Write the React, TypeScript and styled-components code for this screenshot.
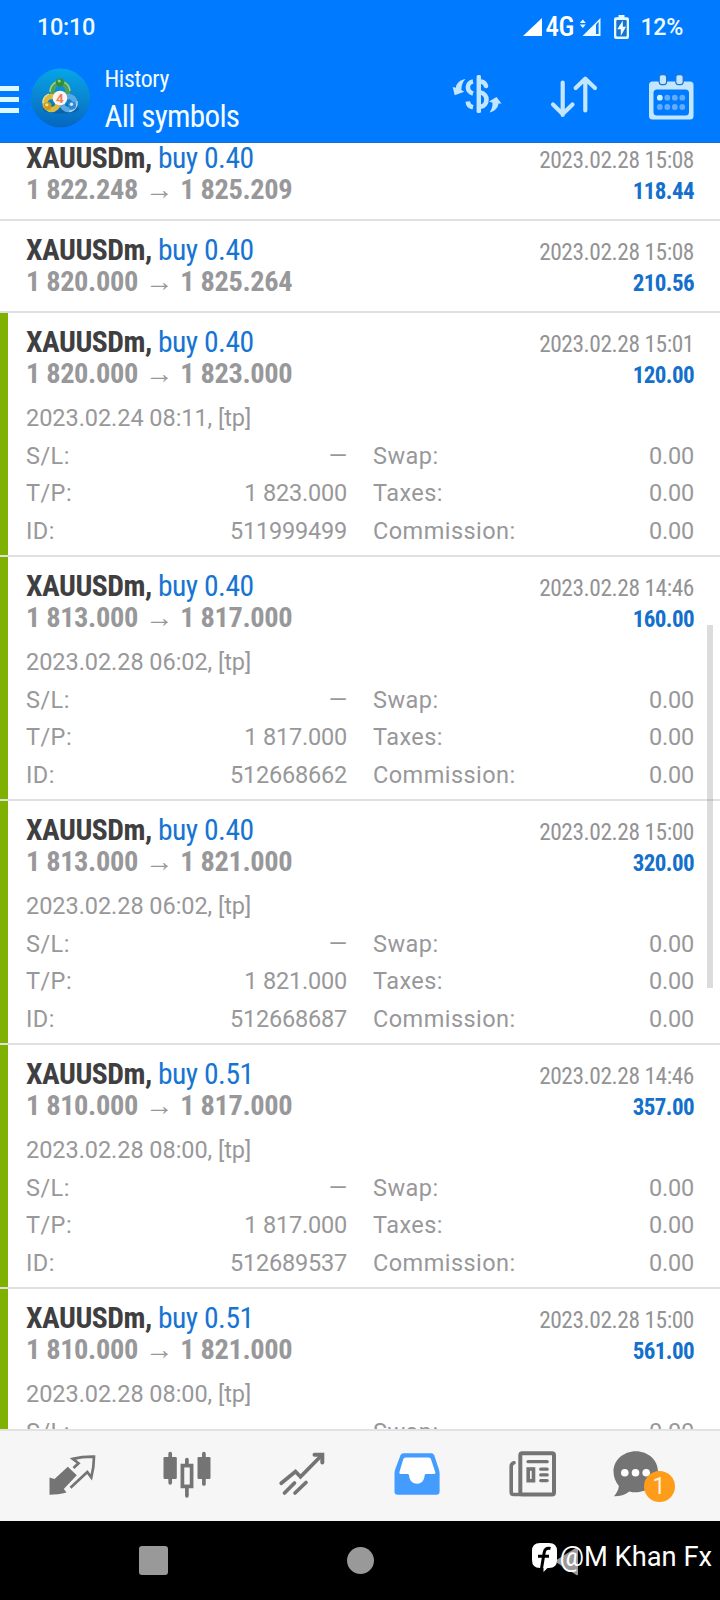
import React from "react";
import styled, { createGlobalStyle } from "styled-components";

const CONDENSED = '"Roboto Condensed", Roboto, sans-serif';

const GlobalStyle = createGlobalStyle`
  *, *::before, *::after { box-sizing: border-box; }
  body { margin: 0; font-family: Roboto, sans-serif; background: #fff; }
  svg { display: block; flex: none; overflow: visible; }
`;

const Screen = styled.div`
  display: flex;
  flex-direction: column;
  width: 720px;
  height: 1600px;
  overflow: hidden;
  background: #fff;
`;

/* ---------- header ---------- */

const Header = styled.header`
  flex: none;
  height: 143px;
  background: #007aff;
  border-bottom: 1px solid #1a6fd0;
  color: #fff;
`;

const StatusBar = styled.div`
  display: flex;
  align-items: center;
  height: 53px;
  padding: 0 37px 0 37px;
`;

const StatusText = styled.span<{ $size: number }>`
  font-size: ${(p) => p.$size}px;
  font-weight: 500;
  line-height: 53px;
  padding-top: 1px;
  letter-spacing: -0.3px;
  color: #eefaff;
`;

const StatusIcons = styled.div`
  display: flex;
  align-items: center;
  margin-left: auto;
`;

const NetworkLabel = styled.span`
  width: 38px;
  padding: 1px 0 0 3px;
  font: 500 27px/53px ${CONDENSED};
  letter-spacing: -0.4px;
  color: #fff;
`;

const BatteryWrap = styled.div`
  margin: 0 11px 0 13px;
`;

const Toolbar = styled.div`
  display: flex;
  align-items: center;
  height: 90px;
  padding-right: 25px;
`;

const MenuButton = styled.div`
  display: flex;
  flex-direction: column;
  gap: 6.5px;
  width: 19px;
  margin-top: 3px;
`;

const MenuBar = styled.i`
  height: 4.7px;
  background: #dff8ff;
`;

const LogoWrap = styled.div`
  margin-left: 12px;
`;

const Titles = styled.div`
  margin-left: 14.5px;
  padding-top: 4px;
  font-family: ${CONDENSED};
  color: #f4fcff;
`;

const SmallTitle = styled.div`
  margin-top: -2px;
  font-size: 23.8px;
  line-height: 35px;
  letter-spacing: -0.4px;
`;

const BigTitle = styled.div`
  font-size: 31.2px;
  line-height: 40px;
  letter-spacing: -0.7px;
`;

const Actions = styled.div`
  display: flex;
  align-items: flex-start;
  margin-left: auto;
`;

const TradeAction = styled.div`
  margin-right: 44px;
`;

const SortAction = styled.div`
  margin-right: 47px;
`;

/* ---------- history list ---------- */

const List = styled.main`
  position: relative;
  flex: 1;
  min-height: 0;
  overflow: hidden;
`;

const ListContent = styled.div`
  margin-top: -14px;
`;

const Deal = styled.section<{ $open: boolean }>`
  display: flex;
  height: ${(p) => (p.$open ? 244 : 92)}px;
  border-bottom: 2px solid #e0e0e0;
`;

const Stripe = styled.div<{ $on: boolean }>`
  flex: none;
  width: 7.5px;
  background: ${(p) => (p.$on ? "#7fb200" : "transparent")};
`;

const DealBody = styled.div`
  flex: 1;
  padding: 13px 26px 0 18.5px;
`;

const Line = styled.div`
  display: flex;
  justify-content: space-between;
  height: 32px;
  line-height: 32px;
  font-family: ${CONDENSED};
  white-space: pre;
`;

const Instrument = styled.span`
  font-size: 29.6px;
  font-weight: 700;
  letter-spacing: -0.5px;
  color: #3f3f41;
`;

const Side = styled.span`
  font-weight: 400;
  color: #1674d2;
`;

const Prices = styled.span`
  font-size: 28.4px;
  font-weight: 700;
  letter-spacing: -0.37px;
  color: #98989a;
`;

const Arrow = styled.span`
  margin: 0 1px;
`;

const CloseTime = styled.span`
  padding-top: 2px;
  font-size: 23.4px;
  letter-spacing: -0.43px;
  color: #939395;
`;

const Profit = styled.span`
  padding-top: 2px;
  font-size: 23px;
  font-weight: 700;
  letter-spacing: -0.6px;
  color: #1470cb;
`;

const Details = styled.div`
  margin-top: 10px;
  font-size: 23.5px;
  font-weight: 400;
  line-height: 37.5px;
  color: #98989a;
`;

const Comment = styled.div`
  letter-spacing: -0.05px;
`;

const Fields = styled.div`
  display: grid;
  grid-template-columns: 321px 321px;
  column-gap: 26px;
`;

const Field = styled.div`
  display: flex;
  justify-content: space-between;
  height: 37.5px;
`;

const FieldName = styled.span`
  letter-spacing: 0.45px;
`;

const FieldValue = styled.span`
  letter-spacing: -0.2px;
`;

const ScrollThumb = styled.div`
  position: absolute;
  top: 482px;
  right: 7px;
  width: 6px;
  height: 363px;
  background: rgba(110, 110, 110, 0.24);
`;

/* ---------- bottom bars ---------- */

const TabBar = styled.nav`
  display: flex;
  flex: none;
  height: 92px;
  padding: 0 14.5px;
  background: #f6f6f6;
  border-top: 2px solid #e2e2e2;
`;

const Tab = styled.div`
  position: relative;
  display: flex;
  justify-content: center;
  width: 115px;
  padding-top: 17px;
`;

const Badge = styled.span`
  position: absolute;
  left: 54px;
  top: 39.5px;
  width: 31px;
  height: 31px;
  border-radius: 50%;
  background: #ff9c1a;
  color: #fff3df;
  font-size: 23px;
  line-height: 32px;
  text-align: center;
`;

const SystemBar = styled.footer`
  position: relative;
  display: flex;
  align-items: center;
  flex: none;
  height: 79px;
  padding: 0 50px;
  background: #000;
`;

const SystemKey = styled.div`
  display: flex;
  justify-content: center;
  width: 207px;
`;

const Square = styled.i`
  width: 29px;
  height: 29px;
  border-radius: 3px;
  background: #999;
`;

const Circle = styled.i`
  width: 27px;
  height: 27px;
  border-radius: 50%;
  background: #999;
`;

const Signature = styled.div`
  position: absolute;
  left: 532px;
  top: 20px;
  display: flex;
  align-items: center;
  gap: 2.5px;
  height: 32px;
  color: #fff;
  font-size: 27.3px;
  line-height: 32px;
  white-space: nowrap;
`;

/* ---------- icons ---------- */

const TINT = "#c3e6ff";
const GREY = "#747474";

const SignalFull = () => (
  <svg width="19" height="18" viewBox="0 0 19 18">
    <path d="M19 0V18H0Z" fill="#fff" />
  </svg>
);

const SignalData = () => (
  <svg width="21" height="18" viewBox="0 0 21 18">
    <path d="M2.800 1.500 5.800 5H-.2ZM2.800 10 5.800 6.500H-.2Z" fill="#eaf8ff" />
    <path d="M20.500 0V18H2.500Z" fill="#eaf8ff" />
    <path d="M16 6.500 18.600 3.800V16H16Z" fill="#007aff" />
  </svg>
);

const BatteryIcon = () => (
  <svg width="15" height="24" viewBox="0 0 15 24">
    <path d="M4.500 0h6v2.300H13a2 2 0 0 1 2 2V22a2 2 0 0 1-2 2H2a2 2 0 0 1-2-2V4.300a2 2 0 0 1 2-2h2.500Z" fill="#e4f9ff" />
    <rect x="2.300" y="5" width="10.400" height="16.500" rx="1" fill="#1673cf" />
    <path d="M8.800 5.500 3.300 14.200H6.800V21L12 11.800H8.800Z" fill="#effcff" />
  </svg>
);

const LogoIcon = () => (
  <svg width="59" height="60" viewBox="0 0 59 60">
    <defs>
      <linearGradient id="disc" x1="0.500" y1="0" x2="0.450" y2="1">
        <stop offset="0" stopColor="#06a5e8" />
        <stop offset="0.550" stopColor="#0a82cf" />
        <stop offset="1" stopColor="#0566bf" />
      </linearGradient>
    </defs>
    <circle cx="29.500" cy="30" r="29.500" fill="url(#disc)" />
    <ellipse cx="30" cy="41" rx="18" ry="4.500" fill="#084f93" opacity="0.500" />
    <g fill="none" strokeWidth="5.500">
      <circle cx="29" cy="22.500" r="7.800" stroke="#4fa05a" />
      <circle cx="20.500" cy="35" r="6.500" stroke="#d9bb42" />
      <circle cx="37.500" cy="35" r="6.500" stroke="#5ba9e2" />
    </g>
    <g fill="none" strokeWidth="1.300">
      <path d="M19 24a10 10 0 0 1 20-1" stroke="#9bd58a" />
      <path d="M12 35a9 9 0 0 1 6-9" stroke="#f2e391" />
      <path d="M46 33a9 9 0 0 1-8 10.500" stroke="#a8d9f7" />
    </g>
    <circle cx="29" cy="14.500" r="4.200" fill="#2f8e3e" />
    <circle cx="28.200" cy="13" r="1.600" fill="#8bd083" />
    <circle cx="16.500" cy="38" r="4" fill="#c79c1d" />
    <circle cx="15.800" cy="36.800" r="1.600" fill="#f5e07c" />
    <circle cx="41" cy="37.500" r="4" fill="#3287cd" />
    <circle cx="40.500" cy="36.300" r="1.700" fill="#cbeaff" />
    <circle cx="29" cy="30" r="7.300" fill="#fff5ee" />
    <text x="28.800" y="35" textAnchor="middle" fontFamily="Roboto, sans-serif" fontSize="13.500" fontWeight="700" fill="#ee7d58">4</text>
  </svg>
);

const TradeIcon = () => (
  <svg width="54" height="46" viewBox="0 0 54 46" fill={TINT}>
    <path d="M15.500 6C9.500 7 6.300 10.500 5.800 14.800L2.700 14 4.700 22.300 14.300 18.700 11.300 17C11.500 12.500 12.500 9 15.500 6Z" />
    <path d="M39.500 39.500C42 36 42.700 33 42.500 29.800L39 28.500 46.500 24 51.500 30.500 48.500 30.500C48 35 44.500 38.500 39.500 39.500Z" />
    <rect x="26.600" y="2" width="4.400" height="38" rx="1.500" />
    <g fill="none" stroke={TINT} strokeWidth="4.600">
      <path d="M23 8.500C16.500 9.500 16 18.500 23 20.500" />
      <path d="M17.800 28.500C18 31.500 20 33.600 23 34.200" />
      <path d="M30.500 8.500C33.500 8.800 35.300 10.500 36 13" strokeLinecap="round" />
      <path d="M30.500 19.500C38.500 21 38.500 32.500 30.500 33.800" />
    </g>
  </svg>
);

const SortIcon = () => (
  <svg width="52" height="48" viewBox="0 0 52 48" fill="none" stroke={TINT} strokeWidth="4.200" strokeLinecap="round" strokeLinejoin="round">
    <path d="M14.700 9.500V42M5 31.500 14.700 41 24.500 31.500" />
    <path d="M37.300 37.500V6M27.700 15 37.300 5.700 47 15" />
  </svg>
);

const CalendarIcon = () => (
  <svg width="48" height="50" viewBox="0 0 48 50">
    <rect x="2" y="8.500" width="44.500" height="38" rx="3.500" fill={TINT} />
    <rect x="6.500" y="16.500" width="35.500" height="26" rx="3.500" fill="#007aff" />
    <rect x="12.200" y="1.600" width="7.400" height="10" rx="2.500" fill={TINT} stroke="#1b74d3" strokeWidth="1.200" />
    <rect x="28.800" y="1.600" width="7.400" height="10" rx="2.500" fill={TINT} stroke="#1b74d3" strokeWidth="1.200" />
    {[24.7, 34].map((y) =>
      [12.8, 20.3, 27.8, 35.3].map((x) => (
        <circle key={`${x}-${y}`} cx={x} cy={y} r="2.900" fill={x < 13 && y < 30 ? "#cdf1ff" : "#62adfb"} />
      ))
    )}
  </svg>
);

const QuotesIcon = () => (
  <svg width="54" height="50" viewBox="0 0 54 50">
    <path d="M4.500 29.500 9.500 31 22.800 18.700 31.800 27.300 18.800 41 21.500 44.500C16 46 10 46.700 4.500 46.700Z" fill={GREY} />
    <path d="M25.500 39.700 42.300 24 46.300 29.500C48 23 49 16 49 8.600 41.500 8.500 34 9.300 27.800 10.900L33.500 15.300 28.500 20" fill="none" stroke={GREY} strokeWidth="2.700" />
  </svg>
);

const ChartIcon = () => (
  <svg width="54" height="50" viewBox="0 0 54 50" fill={GREY}>
    <rect x="3.500" y="9" width="13.300" height="22" rx="1.200" />
    <rect x="37.500" y="9" width="13" height="22" rx="1.200" />
    <g fill="none" stroke={GREY} strokeWidth="3.700" strokeLinecap="round">
      <path d="M10.200 5.500V34.800M43.900 5.500V36M26.900 11.500V16M26.900 40V47.800" />
      <rect x="22.400" y="17.600" width="9.200" height="20.800" strokeLinecap="butt" />
    </g>
  </svg>
);

const TrendIcon = () => (
  <svg width="54" height="50" viewBox="0 0 54 50" fill="none" stroke={GREY} strokeWidth="3.700" strokeLinecap="round">
    <path d="M6.200 35.300 20.500 23.500 25.500 28.800 47 7" />
    <path d="M39.500 6.800H47.300V14.500" strokeWidth="4" />
    <path d="M9.500 45 19.500 35M20 45 31 34.500" />
  </svg>
);

const InboxIcon = () => (
  <svg width="54" height="50" viewBox="0 0 54 50">
    <path d="M13.500 5.300H41.300Q43.500 5.300 44.200 7.300L48.800 21Q49.600 23.500 49.600 26V43.500Q49.600 46.700 46.400 46.700H7.700Q4.500 46.700 4.500 43.500V26Q4.500 23.500 5.300 21L10.500 7.300Q11.300 5.300 13.500 5.300Z" fill="#449cff" />
    <path d="M15.500 9.500H38.700Q40.300 9.500 40.900 11L45.300 24.200Q45.800 26 44 26H35.800Q34.700 26 34.600 27.500C34.200 33 31 35.700 27 35.700S19.500 33 19.100 27.500Q19 26 17.800 26H10.500Q8.900 26 9.400 24.200L13.300 11Q13.900 9.500 15.500 9.500Z" fill="#fff" />
  </svg>
);

const NewsIcon = () => (
  <svg width="54" height="50" viewBox="0 0 54 50" fill="none" stroke={GREY} strokeWidth="3.600" strokeLinecap="round">
    <rect x="15.300" y="5.200" width="33.700" height="41.300" rx="2" strokeWidth="4" />
    <path d="M9 14.800Q6.200 15.500 6.200 18.500V44Q6.200 46.500 8.700 46.500H15.500" />
    <path d="M23 13.700H42.200" strokeWidth="3.200" />
    <rect x="23.200" y="21" width="5.300" height="11.700" strokeWidth="3.600" />
    <path d="M35.700 21.200H42.200M35.700 26.900H42.200M35.700 32.600H42.200" strokeWidth="3.200" />
  </svg>
);

const ChatIcon = () => (
  <svg width="66" height="50" viewBox="0 0 66 50">
    <path d="M21.800 3.300C34 3.300 44 12 44 23.800S34 44.300 21.800 44.300C19.500 44.300 17.300 44 15.300 43.400C11 46.800 5.500 48.400 0 48.300C2.500 45.500 4.500 42 4.900 38C1.500 34 -.5 29 -.5 23.800C-.5 12 9.500 3.300 21.800 3.300Z" fill={GREY} />
    <g fill="#fff">
      <circle cx="10.800" cy="24.700" r="3.800" />
      <circle cx="21.500" cy="24.700" r="3.800" />
      <circle cx="32.200" cy="24.700" r="3.800" />
    </g>
  </svg>
);

const BackIcon = () => (
  <svg width="24" height="30" viewBox="0 0 24 30">
    <path d="M23 2.500V28Q23 29.800 21.400 29L1.500 16.400Q0 15.200 1.500 14.100L21.400 1.500Q23 .8 23 2.500Z" fill="#999" />
  </svg>
);

const SocialIcon = () => (
  <svg width="25" height="29" viewBox="0 0 25 29">
    <path d="M8 0H17Q25 0 25 8V17Q25 25 17 25H15.500L11.500 29V25H8Q0 25 0 17V8Q0 0 8 0Z" fill="#fff" />
    <path d="M18.500 5.500C14.500 4.500 12.700 6.500 12.200 9.500L9.500 25.500M6 13.300H17" fill="none" stroke="#000" strokeWidth="3" />
  </svg>
);

/* ---------- data ---------- */

interface DealData {
  volume: string;
  from: string;
  to: string;
  closed: string;
  profit: string;
  opened?: string;
  id?: string;
}

const deals: DealData[] = [
  { volume: "0.40", from: "1 822.248", to: "1 825.209", closed: "2023.02.28 15:08", profit: "118.44" },
  { volume: "0.40", from: "1 820.000", to: "1 825.264", closed: "2023.02.28 15:08", profit: "210.56" },
  { volume: "0.40", from: "1 820.000", to: "1 823.000", closed: "2023.02.28 15:01", profit: "120.00", opened: "2023.02.24 08:11", id: "511999499" },
  { volume: "0.40", from: "1 813.000", to: "1 817.000", closed: "2023.02.28 14:46", profit: "160.00", opened: "2023.02.28 06:02", id: "512668662" },
  { volume: "0.40", from: "1 813.000", to: "1 821.000", closed: "2023.02.28 15:00", profit: "320.00", opened: "2023.02.28 06:02", id: "512668687" },
  { volume: "0.51", from: "1 810.000", to: "1 817.000", closed: "2023.02.28 14:46", profit: "357.00", opened: "2023.02.28 08:00", id: "512689537" },
  { volume: "0.51", from: "1 810.000", to: "1 821.000", closed: "2023.02.28 15:00", profit: "561.00", opened: "2023.02.28 08:00" },
];

const DealRow = ({ deal }: { deal: DealData }) => {
  const open = Boolean(deal.opened);
  const fields: [string, string][] = [
    ["S/L:", "—"],
    ["Swap:", "0.00"],
    ["T/P:", deal.to],
    ["Taxes:", "0.00"],
    ["ID:", deal.id ?? ""],
    ["Commission:", "0.00"],
  ];
  const visible = deal.id ? fields : fields.slice(0, 2);
  return (
    <Deal $open={open}>
      <Stripe $on={open} />
      <DealBody>
        <Line>
          <Instrument>
            XAUUSDm, <Side>buy {deal.volume}</Side>
          </Instrument>
          <CloseTime>{deal.closed}</CloseTime>
        </Line>
        <Line>
          <Prices>
            {deal.from} <Arrow>→</Arrow> {deal.to}
          </Prices>
          <Profit>{deal.profit}</Profit>
        </Line>
        {open && (
          <Details>
            <Comment>{deal.opened}, [tp]</Comment>
            <Fields>
              {visible.map(([name, value]) => (
                <Field key={name}>
                  <FieldName>{name}</FieldName>
                  <FieldValue>{value}</FieldValue>
                </Field>
              ))}
            </Fields>
          </Details>
        )}
      </DealBody>
    </Deal>
  );
};

export default function App() {
  return (
    <>
      <GlobalStyle />
      <Screen>
        <Header>
          <StatusBar>
            <StatusText $size={23.5}>10:10</StatusText>
            <StatusIcons>
              <SignalFull />
              <NetworkLabel>4G</NetworkLabel>
              <SignalData />
              <BatteryWrap>
                <BatteryIcon />
              </BatteryWrap>
              <StatusText $size={23.2}>12%</StatusText>
            </StatusIcons>
          </StatusBar>
          <Toolbar>
            <MenuButton>
              <MenuBar />
              <MenuBar />
              <MenuBar />
            </MenuButton>
            <LogoWrap>
              <LogoIcon />
            </LogoWrap>
            <Titles>
              <SmallTitle>History</SmallTitle>
              <BigTitle>All symbols</BigTitle>
            </Titles>
            <Actions>
              <TradeAction><TradeIcon /></TradeAction>
              <SortAction><SortIcon /></SortAction>
              <CalendarIcon />
            </Actions>
          </Toolbar>
        </Header>

        <List>
          <ListContent>
            {deals.map((deal, i) => (
              <DealRow key={i} deal={deal} />
            ))}
          </ListContent>
          <ScrollThumb />
        </List>

        <TabBar>
          <Tab><QuotesIcon /></Tab>
          <Tab><ChartIcon /></Tab>
          <Tab><TrendIcon /></Tab>
          <Tab><InboxIcon /></Tab>
          <Tab><NewsIcon /></Tab>
          <Tab>
            <ChatIcon />
            <Badge>1</Badge>
          </Tab>
        </TabBar>

        <SystemBar>
          <SystemKey><Square /></SystemKey>
          <SystemKey><Circle /></SystemKey>
          <SystemKey><BackIcon /></SystemKey>
          <Signature>
            <SocialIcon />
            <span>@M Khan Fx</span>
          </Signature>
        </SystemBar>
      </Screen>
    </>
  );
}
